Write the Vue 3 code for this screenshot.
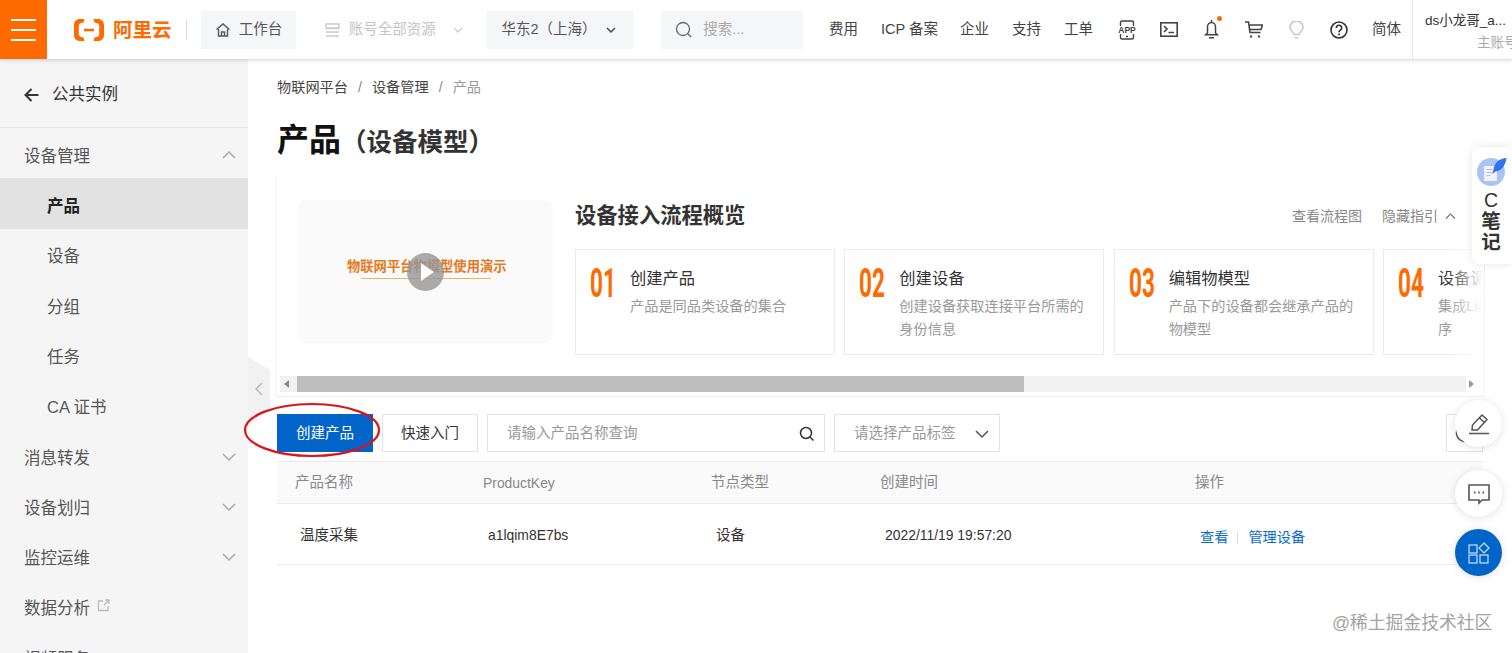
<template>
  <div class="page">
    <header class="topbar">
      <button class="burger"><span></span><span></span><span></span></button>
      <div class="logo">
        <svg width="30" height="22" viewBox="0 0 30 22">
          <path d="M10.500 0H6C2.500 0 0 2.500 0 6v10c0 3.500 2.500 6 6 6h4.500l-1-3.600-3-.7c-1-.3-1.700-1.100-1.700-2.100V6.400c0-1 .7-1.800 1.700-2.100l3-.7zM19.500 0H24c3.500 0 6 2.500 6 6v10c0 3.500-2.500 6-6 6h-4.500l1-3.600 3-.7c1-.3 1.700-1.100 1.700-2.100V6.400c0-1-.7-1.800-1.700-2.100l-3-.7zM10 9.800h10v2.400H10z" fill="#ff6a00"/>
        </svg>
        <span class="logo-text">阿里云</span>
      </div>
      <i class="logo-sep"></i>
      <div class="pill work">
        <svg width="16" height="16" viewBox="0 0 16 16" fill="none" stroke="#555" stroke-width="1.400"><path d="M1.500 7.500 8 2l6.500 5.500M3.500 7v7h9V7M6.500 14V10h3v4"/></svg>
        工作台
      </div>
      <div class="resource">
        <svg width="15" height="16" viewBox="0 0 15 16" fill="none" stroke="#ccc" stroke-width="1.600"><path d="M1 2h13v4H1zM1 6.500h13M1 10h13M1 14h13"/></svg>
        <span>账号全部资源</span>
        <svg width="12" height="12" viewBox="0 0 12 12" fill="none" stroke="#ccc" stroke-width="1.300"><path d="m2 4 4 4 4-4"/></svg>
      </div>
      <div class="pill region">
        华东2（上海）
        <svg width="12" height="12" viewBox="0 0 12 12" fill="none" stroke="#444" stroke-width="1.400"><path d="m2 4 4 4 4-4"/></svg>
      </div>
      <div class="pill search">
        <svg width="18" height="18" viewBox="0 0 18 18" fill="none" stroke="#666" stroke-width="1.300"><circle cx="8" cy="8" r="6.500"/><path d="m13 13 3 3"/></svg>
        <span>搜索...</span>
      </div>
      <nav class="links">
        <a>费用</a>
        <a class="l-icp">ICP 备案</a>
        <a>企业</a>
        <a>支持</a>
        <a>工单</a>
      </nav>
      <div class="tools">
        <svg width="20" height="20" viewBox="0 0 20 20" fill="none" stroke="#444" stroke-width="1.400"><path d="M3.500 6V2.500C3.500 1.500 4 1 5 1h10c1 0 1.500.5 1.500 1.500V6M3.500 14v3.500c0 1 .5 1.500 1.500 1.500h10c1 0 1.500-.5 1.500-1.500V14M9 16.500h2"/><text x="10" y="13" text-anchor="middle" class="app-t">APP</text></svg>
        <svg width="18" height="15" viewBox="0 0 18 15" fill="none" stroke="#444" stroke-width="1.600"><rect x=".8" y=".8" width="16.400" height="13.400"/><path d="m4 4 3 3-3 3M8.500 10.500h5.500"/></svg>
        <span class="bell">
          <svg width="15" height="19" viewBox="0 0 15 19" fill="none" stroke="#444" stroke-width="1.500"><path d="M7.500 0v2.500M3.500 13V7c0-2.500 1.700-4.500 4-4.500s4 2 4 4.500v6l2 1.800H1.500zM5 17.800h5"/></svg>
          <i></i>
        </span>
        <svg width="18" height="17" viewBox="0 0 18 17" fill="none" stroke="#444" stroke-width="1.600"><path d="M0 1h3.500l1.500 10.500h10.500M4 4h13.500L16 8.500H4.800"/><path d="M6 14.500v2M14 14.500v2" stroke-width="2.200"/></svg>
        <svg width="15" height="18" viewBox="0 0 15 18" fill="none" stroke="#c8c8c8" stroke-width="1.500"><path d="M5 13.500c0-2-4-3.500-4-7a6.500 6.500 0 0 1 13 0c0 3.500-4 5-4 7zM5.500 16.800h4"/></svg>
        <svg width="18" height="18" viewBox="0 0 18 18" fill="none" stroke="#333" stroke-width="1.600"><circle cx="9" cy="9" r="8"/><path d="M6.300 7c0-1.600 1.100-2.700 2.700-2.700S11.700 5.400 11.700 7c0 2.200-2.700 2.200-2.700 4.300"/><path d="M9 12.500v1.700" stroke-width="1.800"/></svg>
      </div>
      <a class="lang">简体</a>
      <div class="account">
        <div class="acc-name">ds小龙哥_a...</div>
        <div class="acc-type">主账号</div>
      </div>
    </header>

    <div class="body">
      <aside class="sidebar">
        <div class="back">
          <svg width="15" height="14" viewBox="0 0 15 14" fill="none" stroke="#333" stroke-width="2"><path d="M14.500 7H2M7.500 1 1.500 7l6 6"/></svg>
          公共实例
        </div>
        <div class="menu">
          <div
            v-for="item in menu"
            :key="item.name"
            :class="['menu-row', item.sub ? 'menu-sub' : '', item.active ? 'menu-active' : '']"
          >
            <span>{{ item.name }}</span>
            <svg v-if="item.ext" class="ext" width="13" height="13" viewBox="0 0 13 13" fill="none" stroke="#bbb" stroke-width="1.300"><path d="M6 2H1.500v9.500H11V7M7 6l5-5M8 1h4v4"/></svg>
            <svg v-if="item.arrow" class="chev" width="16" height="10" viewBox="0 0 16 10" fill="none" stroke="#aaa" stroke-width="1.500"><path :d="item.arrow === 'up' ? 'M2 8l6-6 6 6' : 'M2 2l6 6 6-6'"/></svg>
          </div>
        </div>
      </aside>

      <main class="content">
        <div class="crumbs">
          <span>物联网平台</span><i>/</i><span>设备管理</span><i>/</i><span class="cur">产品</span>
        </div>
        <h1 class="title">产品<small>（设备模型）</small></h1>

        <section class="guide">
          <div class="guide-main">
            <div class="video">
              <span class="video-t">物联网平台物模型使用演示</span>
              <i class="video-line"></i>
              <span class="play"></span>
            </div>
            <div class="flow">
              <div class="flow-head">
                <h2>设备接入流程概览</h2>
                <div class="flow-links">
                  <a>查看流程图</a>
                  <a>隐藏指引
                    <svg width="11" height="8" viewBox="0 0 11 8" fill="none" stroke="#777" stroke-width="1.200"><path d="m1 6.500 4.500-4.500L10 6.500"/></svg>
                  </a>
                </div>
              </div>
              <div class="steps">
                <div v-for="s in steps" :key="s.no" class="step">
                  <span class="step-no"><b>{{ s.no }}</b></span>
                  <div class="step-txt">
                    <div class="step-title">{{ s.title }}</div>
                    <div class="step-desc">{{ s.desc }}</div>
                  </div>
                </div>
                <i class="steps-fade"></i>
              </div>
            </div>
          </div>
          <div class="scrollbar">
            <span class="sb-left"></span>
            <span class="sb-thumb"></span>
            <span class="sb-right"></span>
          </div>
        </section>

        <div class="toolbar">
          <button class="btn primary">创建产品</button>
          <button class="btn">快速入门</button>
          <div class="field query">
            <span>请输入产品名称查询</span>
            <svg width="16" height="16" viewBox="0 0 16 16" fill="none" stroke="#333" stroke-width="1.500"><circle cx="7" cy="7" r="5.500"/><path d="m11 11 3.500 3.500"/></svg>
          </div>
          <div class="field tag">
            <span>请选择产品标签</span>
            <svg width="16" height="10" viewBox="0 0 16 10" fill="none" stroke="#555" stroke-width="1.500"><path d="m2 2 6 6 6-6"/></svg>
          </div>
          <button class="btn refresh">
            <svg width="20" height="20" viewBox="0 0 20 20" fill="none" stroke="#555" stroke-width="1.400"><path d="M18.500 10A8.500 8.500 0 1 1 16 4M16.500 1v3.500H13"/></svg>
          </button>
        </div>

        <div class="table">
          <div class="t-row t-head">
            <span>产品名称</span><span class="num">ProductKey</span><span>节点类型</span><span>创建时间</span><span>操作</span>
          </div>
          <div class="t-row t-body">
            <span>温度采集</span><span class="num">a1lqim8E7bs</span><span>设备</span><span class="num">2022/11/19 19:57:20</span>
            <span class="ops"><a>查看</a><i></i><a>管理设备</a></span>
          </div>
        </div>
      </main>
    </div>

    <div class="collapse">
      <svg width="8" height="14" viewBox="0 0 8 14" fill="none" stroke="#b5b5b5" stroke-width="1.300"><path d="M7 1 1 7l6 6"/></svg>
    </div>

    <svg class="ring" width="138" height="56" viewBox="0 0 138 56" fill="none">
      <ellipse cx="69" cy="28" rx="67" ry="26" stroke="#d9141c" stroke-width="2.200"/>
    </svg>

    <div class="note">
      <svg width="30" height="30" viewBox="0 0 30 30">
        <circle cx="14" cy="15" r="14" fill="#a9c3f5"/>
        <path d="M7 9h13v15H7z" fill="#eef3fd"/>
        <path d="M9.500 12.500h6M9.500 15.500h5M9.500 18.500h4" stroke="#a9c3f5" stroke-width="1"/>
        <path d="M29.500 1c-7 .5-12 4-13 12l-1.500 4 3.500-2.500c6.500-1 10-6.500 11-13.500z" fill="#2f73ee"/>
      </svg>
      <div class="note-t"><span class="note-c">C</span><br>笔<br>记</div>
    </div>

    <div class="fab f-edit">
      <svg width="22" height="22" viewBox="0 0 22 22" fill="none" stroke="#555" stroke-width="1.500"><path d="m14 2 5 4.500-9.500 10.500H4l.5-5zM11.500 5l5 4.500M1 20.500h20"/></svg>
    </div>
    <div class="fab f-chat">
      <svg width="22" height="22" viewBox="0 0 22 22" fill="none" stroke="#555" stroke-width="1.600"><path d="M1 2h20v15h-7l-3 3v-3H1z"/><path d="M6 9.500h1.500M10.200 9.500h1.500M14.500 9.500H16" stroke-width="2"/></svg>
    </div>
    <div class="fab f-apps">
      <svg width="22" height="22" viewBox="0 0 22 22" fill="none" stroke="#cfe2fa" stroke-width="1.200"><rect x="1" y="3" width="8" height="8"/><rect x="1" y="13" width="8" height="8"/><rect x="12" y="13" width="8" height="8"/><path d="m16 1 5 5-5 5-5-5z"/></svg>
    </div>

    <div class="mark">@稀土掘金技术社区</div>
  </div>
</template>

<script setup>
const menu = [
  { name: '设备管理', arrow: 'up' },
  { name: '产品', sub: true, active: true },
  { name: '设备', sub: true },
  { name: '分组', sub: true },
  { name: '任务', sub: true },
  { name: 'CA 证书', sub: true },
  { name: '消息转发', arrow: 'down' },
  { name: '设备划归', arrow: 'down' },
  { name: '监控运维', arrow: 'down' },
  { name: '数据分析', ext: true },
  { name: '视频服务' }
]

const steps = [
  { no: '01', title: '创建产品', desc: '产品是同品类设备的集合' },
  { no: '02', title: '创建设备', desc: '创建设备获取连接平台所需的身份信息' },
  { no: '03', title: '编辑物模型', desc: '产品下的设备都会继承产品的物模型' },
  { no: '04', title: '设备调试', desc: '集成Link SDK，开发设备端程序' }
]
</script>

<style>
html, body { margin: 0; overflow: hidden; background: #fff; }
</style>

<style scoped>
.page {
  position: relative;
  width: 1512px;
  height: 653px;
  overflow: hidden;
  font-family: "Liberation Sans", "Noto Sans CJK SC", sans-serif;
  font-size: 14.5px;
  line-height: 1.5;
  color: #333;
  display: flex;
  flex-direction: column;
}

/* 顶栏 */
.topbar {
  height: 59px;
  flex: none;
  display: flex;
  align-items: center;
  background: #fff;
  box-shadow: 0 1px 4px rgba(0, 0, 0, .18);
  position: relative;
  z-index: 2;
  white-space: nowrap;
}
.burger {
  width: 47px;
  height: 59px;
  flex: none;
  border: none;
  padding: 0 11px;
  background: #ff6a00;
  display: flex;
  flex-direction: column;
  justify-content: center;
  gap: 8px;
}
.burger span { display: block; height: 2px; background: #fff; }
.logo {
  margin-left: 27px;
  width: 99px;
  display: flex;
  align-items: center;
  gap: 9px;
}
.logo-text {
  font-size: 19.500px;
  line-height: 22px;
  font-weight: 700;
  color: #ff6a00;
}
.logo-sep { width: 1px; height: 20px; background: #ddd; margin-left: 13px; }
.pill {
  height: 38px;
  background: #f5f6f7;
  display: flex;
  align-items: center;
  color: #555;
}
.work { width: 95px; margin-left: 14px; padding-left: 14px; gap: 8px; box-sizing: border-box; }
.resource {
  width: 163px;
  display: flex;
  align-items: center;
  margin-left: 29px;
  color: #c4c4c4;
  gap: 9px;
  box-sizing: border-box;
}
.resource svg:last-child { margin-left: 7px; }
.region {
  width: 146px;
  box-sizing: border-box;
  padding-left: 14px;
  justify-content: space-between;
  padding-right: 16px;
}
.search {
  width: 142px;
  margin-left: 28px;
  padding-left: 14px;
  gap: 10px;
  box-sizing: border-box;
  color: #aaa;
}
.links { display: flex; gap: 23px; margin-left: 26px; color: #444; }
.l-icp { margin-right: -1px; }
.tools { display: flex; align-items: center; gap: 26px; margin-left: 24px; }
.tools > :first-child { margin-right: -3px; }
.app-t { font: 700 8.500px "Liberation Sans", sans-serif; fill: #444; stroke: #fff; stroke-width: 1.500px; paint-order: stroke; }
.bell { position: relative; display: flex; }
.bell i {
  position: absolute;
  right: -3px;
  top: -4px;
  width: 5px;
  height: 5px;
  border-radius: 50%;
  background: #ff6a00;
}
.lang { margin-left: 24px; color: #444; }
.account {
  height: 59px;
  margin-left: 11px;
  padding-left: 12px;
  border-left: 1px solid #e8e8e8;
  width: 100px;
  box-sizing: border-box;
  flex: none;
  font-size: 13.5px;
}
.acc-name { margin-top: 11px; line-height: 20px; color: #333; }
.acc-type { margin-top: 2px; line-height: 20px; padding-left: 52px; color: #aaa; }

.body { flex: 1; min-height: 0; display: flex; }

/* 侧栏 */
.sidebar {
  width: 248px;
  flex: none;
  background: #f5f5f6;
  overflow: hidden;
}
.back {
  height: 69px;
  box-sizing: border-box;
  border-bottom: 1px solid #e4e4e4;
  padding: 3px 0 0 24px;
  display: flex;
  align-items: center;
  gap: 13px;
  font-size: 16.5px;
  color: #333;
}
.menu-row {
  height: 50.300px;
  box-sizing: border-box;
  padding-top: 6px;
  display: flex;
  align-items: center;
  padding-left: 24px;
  padding-right: 11px;
  font-size: 16.500px;
  color: #555;
  position: relative;
}
.menu-sub { padding-left: 47px; color: #555; }
.menu-active { background: #e2e2e2; color: #222; font-weight: 700; }
.chev { position: absolute; right: 11px; top: 22px; }
.ext { margin-left: 7px; margin-top: -6px; }

/* 内容区 */
.content {
  flex: 1;
  min-width: 0;
  padding: 0 29px;
  overflow: hidden;
}
.crumbs {
  height: 56px;
  padding-top: 17px;
  box-sizing: border-box;
  display: flex;
  align-items: flex-start;
  font-size: 14.2px;
  line-height: 22px;
  color: #444;
}
.crumbs i { margin: 0 10px; font-style: normal; color: #888; }
.crumbs .cur { color: #999; }
.title {
  margin: 0;
  height: 63px;
  font-size: 32px;
  line-height: 50px;
  font-weight: 700;
  color: #111;
}
.title small { font-size: 25.500px; font-weight: 700; color: #333; }

.guide {
  height: 219px;
  margin-left: -2px;
  margin-right: -2px;
  padding-left: 2px;
  border-left: 1px solid #f2f2f2;
  border-right: 1px solid #f2f2f2;
  border-bottom: 1px solid #f0f0f0;
  box-sizing: border-box;
}
.guide-main { display: flex; height: 198px; padding-left: 20px; }
.video {
  width: 255px;
  height: 143px;
  margin-top: 22px;
  flex: none;
  border-radius: 8px;
  background: #fafafa;
  position: relative;
}
.video-t {
  position: absolute;
  left: 49px;
  top: 57px;
  font-size: 13.300px;
  line-height: 20px;
  font-weight: 700;
  color: #e8781e;
  white-space: nowrap;
}
.video-line {
  position: absolute;
  left: 63px;
  top: 78px;
  width: 130px;
  height: 1px;
  background: #efb45f;
}
.play {
  position: absolute;
  left: 109px;
  top: 53px;
  width: 37px;
  height: 38px;
  border-radius: 50%;
  background: rgba(150, 150, 150, .8);
}
.play::after {
  content: "";
  position: absolute;
  left: 14px;
  top: 10px;
  border-left: 13px solid #fff;
  border-top: 9px solid transparent;
  border-bottom: 9px solid transparent;
}
.flow { margin-left: 22px; flex: 1; min-width: 0; position: relative; }
.flow-head {
  height: 71px;
  display: flex;
  justify-content: space-between;
  padding-right: 28px;
}
.flow-head h2 {
  margin: 22px 0 0;
  font-size: 21.300px;
  line-height: 32px;
  font-weight: 700;
  color: #333;
}
.flow-links { display: flex; gap: 20px; margin-top: 27px; line-height: 22px; color: #888; font-size: 14px; height: 22px; }
.flow-links a { display: flex; align-items: center; gap: 7px; }
.steps {
  display: flex;
  gap: 9.330px;
  width: 908px;
  overflow: hidden;
  position: relative;
}
.step {
  width: 260px;
  height: 106px;
  flex: none;
  box-sizing: border-box;
  border: 1px solid #ebebeb;
  padding: 15px 14px 0 14px;
  display: flex;
}
.step-no {
  width: 40px;
  flex: none;
  color: #ff6a00;
  font-family: "Roboto", "Liberation Sans", sans-serif;
  font-size: 41px;
  line-height: 36px;
  display: block;
}
.step-no b {
  display: inline-block;
  font-weight: 700;
  transform: scaleX(.55);
  transform-origin: left center;
}
.step-txt { min-width: 0; }
.step-title { font-size: 16.300px; line-height: 26px; color: #333; white-space: nowrap; }
.step-desc { margin-top: 4px; font-size: 14.200px; line-height: 23px; color: #999; width: 190px; }
.steps-fade {
  position: absolute;
  right: 0;
  top: 0;
  bottom: 0;
  width: 36px;
  background: linear-gradient(to right, rgba(255, 255, 255, 0), #fff);
}
.scrollbar {
  display: flex;
  align-items: stretch;
  height: 16px;
  width: 1196px;
  margin-left: 2px;
  position: relative;
}
.sb-left { width: 17px; flex: none; position: relative; background: #f1f1f1; }
.sb-left::after {
  content: "";
  position: absolute;
  left: 4px;
  top: 4px;
  border-right: 5px solid #888;
  border-top: 4px solid transparent;
  border-bottom: 4px solid transparent;
}
.sb-thumb { width: 727px; background: #bebebe; }
.sb-right {
  flex: 1;
  position: relative;
  background: linear-gradient(to right, #f1f1f1, #f1f1f1 calc(100% - 10px), #fff calc(100% - 10px));
}
.sb-right::after {
  content: "";
  position: absolute;
  right: 2px;
  top: 4px;
  border-left: 5px solid #999;
  border-top: 4px solid transparent;
  border-bottom: 4px solid transparent;
}

.toolbar {
  display: flex;
  gap: 9px;
  height: 38px;
  margin-top: 17px;
}
.btn {
  width: 96px;
  height: 38px;
  border: 1px solid #e3e3e3;
  background: #fff;
  color: #333;
  font: inherit;
  padding: 2px 0 0;
  box-sizing: border-box;
}
.btn.primary { background: #0064c8; border-color: #0064c8; color: #fff; }
.btn.refresh {
  width: 37px;
  margin-left: 437px;
  padding: 0;
  display: flex;
  align-items: center;
  justify-content: center;
}
.field {
  height: 38px;
  box-sizing: border-box;
  border: 1px solid #e3e3e3;
  display: flex;
  align-items: center;
  justify-content: space-between;
  padding: 2px 9px 0 19px;
  color: #999;
}
.query { width: 338px; }
.tag { width: 166px; }

.table { margin-top: 9px; }
.t-row {
  display: grid;
  grid-template-columns: 188px 228px 169px 315px 1fr;
  align-items: center;
  padding-left: 18px;
  box-sizing: border-box;
}
.t-row .num { font-size: 13.900px; }
.t-head {
  height: 43px;
  padding-top: 1px;
  border-top: 1px solid #ebebeb;
  border-bottom: 1px solid #ebebeb;
  background: #fafafa;
  color: #888;
}
.t-body {
  height: 61px;
  padding-top: 3px;
  border-bottom: 1px solid #ebebeb;
  color: #333;
}
.t-body span { padding-left: 5px; }
.ops { display: flex; align-items: center; color: #0a6cc8; margin-top: 4px; font-size: 14.200px; }
.ops i { width: 1px; height: 13px; background: #ddd; margin: 0 10px 0 9px; }

/* 悬浮层 */
.collapse {
  position: absolute;
  left: 248px;
  top: 357px;
  width: 22px;
  height: 70px;
  background: #f1f1f1;
  clip-path: polygon(0 0, 100% 18%, 100% 72%, 0 100%);
  display: flex;
  align-items: center;
  justify-content: center;
  padding-bottom: 7px;
  box-sizing: border-box;
}
.ring { position: absolute; left: 243px; top: 402px; }
.note {
  position: absolute;
  right: 0;
  top: 147px;
  width: 40px;
  height: 117px;
  padding: 10px 2px 0 0;
  box-sizing: border-box;
  background: #fff;
  border-radius: 8px 0 0 8px;
  box-shadow: 0 0 8px rgba(0, 0, 0, .1);
  text-align: center;
}
.note svg { display: block; margin-left: 5px; }
.note-t {
  margin-top: 3px;
  font-size: 19.500px;
  line-height: 21px;
  font-weight: 700;
  color: #333;
}
.note-c { font-weight: 400; }
.fab {
  position: absolute;
  left: 1455px;
  width: 47px;
  height: 47px;
  border-radius: 50%;
  background: #fff;
  box-shadow: 0 1px 8px rgba(0, 0, 0, .12);
  display: flex;
  align-items: center;
  justify-content: center;
}
.f-edit { top: 400px; }
.f-chat { top: 470px; }
.f-apps { top: 529px; background: #0064c8; }
.mark {
  position: absolute;
  left: 1332px;
  top: 610px;
  font-size: 17.800px;
  line-height: 26px;
  color: #a3a3a3;
  white-space: nowrap;
}
</style>
